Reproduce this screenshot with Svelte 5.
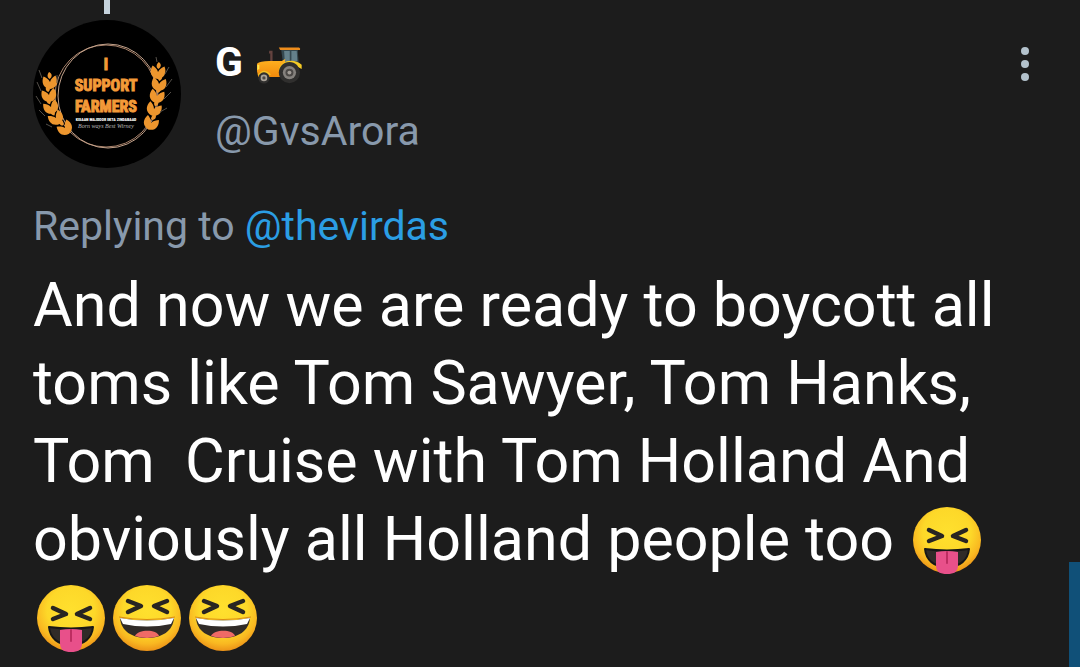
<script>
  const reactions = ['tongue', 'tongue', 'laugh', 'laugh'];
  const leftWheat = [
    { x: 17, y: 62, r: -5 },
    { x: 16, y: 75, r: -12 },
    { x: 18, y: 87, r: -22 },
    { x: 23, y: 98, r: -32 },
    { x: 32, y: 108, r: -36 }
  ];
  const rightWheat = [
    { x: 125, y: 52, r: 5 },
    { x: 126, y: 64, r: 8 },
    { x: 124, y: 76, r: 14 },
    { x: 121, y: 89, r: 20 },
    { x: 118, y: 103, r: 24 }
  ];
</script>

{#snippet wheat(grains)}
  {#each grains as g}
    <path d="M0 7C-7 6 -9 0 -6 -6C-4 -5 -1 -3 0 0C1 -3 4 -5 6 -6C9 0 7 6 0 7ZM0 -3C-3 -5 -2 -8 0 -10C3 -8 3 -5 0 -3Z" fill="#ed962e" transform="translate({g.x} {g.y}) rotate({g.r})" />
  {/each}
{/snippet}

{#snippet face(kind)}
  <svg class="emoji" viewBox="0 5 76 70" role="img" aria-label={kind === 'tongue' ? 'Squinting face with tongue' : 'Laughing face'}>
    <ellipse cx="38" cy="38" rx="34" ry="33" fill="url(#skin)" />
    <g fill="none" stroke="#282522" stroke-width="4.5" stroke-linecap="round" stroke-linejoin="round">
      {#if kind === 'tongue'}
        <path d="M20 28L33 34L20 39M57 28L44 34L57 39" />
      {:else}
        <path d="M19 21L32 26L19 32M58 21L45 26L58 32" />
      {/if}
    </g>
    {#if kind === 'tongue'}
      <path d="M16 47Q38 50 60 47C59 58 51 65 38 65S17 58 16 47Z" fill="#302b28" stroke="#171717" stroke-width="2" stroke-linejoin="round" />
      <path d="M27 50Q38 48 49 50V63C49 70 45 72 38 72S27 70 27 63Z" fill="#e8508a" />
      <path d="M38 50V61" stroke="#bd2d61" stroke-width="2" stroke-linecap="round" />
    {:else}
      <path d="M11 38Q38 43 65 38C64 51 53 58 38 58S12 51 11 38Z" fill="#302b28" />
      <path d="M11 38Q38 43 65 38L62 44Q38 49 14 44Z" fill="#fff" />
      <path d="M26 56C29 49 48 49 50 56Q38 60 26 56Z" fill="#ef6a66" />
      <path d="M10 37Q38 42 66 37" fill="none" stroke="#dc8b13" stroke-width="1" />
    {/if}
  </svg>
{/snippet}

<svg class="defs" width="0" height="0" aria-hidden="true">
  <defs>
    <radialGradient id="skin" cx="50%" cy="38%" r="64%">
      <stop offset="0" stop-color="#ffe02e" />
      <stop offset="0.55" stop-color="#fdd829" />
      <stop offset="0.8" stop-color="#f9b821" />
      <stop offset="1" stop-color="#e98b16" />
    </radialGradient>
    <linearGradient id="hood" x2="0" y2="1">
      <stop offset="0" stop-color="#ffb321" />
      <stop offset="1" stop-color="#f28a0c" />
    </linearGradient>
  </defs>
</svg>

<main>
  <article>
    <header>
      <div class="profile">
        <span class="thread"></span>
        <svg class="avatar" viewBox="0 0 148 148" role="img" aria-label="I support farmers">
          <circle cx="74" cy="74" r="74" fill="#000" />
          <ellipse cx="73" cy="76" rx="51" ry="51" fill="none" stroke="#a9826a" stroke-width="1" />
          <ellipse cx="75" cy="76" rx="50" ry="52" fill="none" stroke="#c2a18a" stroke-width="1" />
          {@render wheat(leftWheat)}
          {@render wheat(rightWheat)}
          <path d="M9 58L6 50M8 71L4 62M8 84L3 76M12 96L6 90M19 107L13 104M24 63V55M124 42L123 37M132 54L136 47M133 67L139 59M131 79L138 72M127 92L134 88" fill="none" stroke="#55504a" />
          <g class="slogan">
            <text x="73" y="50">I</text>
            <text x="73" y="71">SUPPORT</text>
            <text x="73" y="92">FARMERS</text>
          </g>
          <text class="motto" x="73" y="101">KISAAN MAJDOOR EKTA ZINDABAAD</text>
          <text class="script" x="73" y="108">Born ways Best Wirney</text>
        </svg>
      </div>
      <div class="author">
        <div class="name">G
          <svg class="tractor" viewBox="150 50 142 114" role="img" aria-label="Tractor">
            <path d="M190 64H200V97H193V72H189Z" fill="#64433f" />
            <path d="M226 60H276L279 103H232Z" fill="#354850" />
            <path d="M235 65H252V99H237ZM257 65H273L275 95H257Z" fill="#64808b" />
            <path d="M219 54H280Q285 56 283 62H223Z" fill="#ef8d1c" />
            <path d="M153 103Q162 96 190 95H228L238 89V143H157L153 126Z" fill="url(#hood)" />
            <path d="M154 107L160 106V119L154 122Z" fill="#ffe64d" />
            <path d="M219 123C222 93 265 85 288 106V119L275 112L246 107L226 127Z" fill="#f5cb25" />
            <circle cx="251" cy="130" r="32" fill="#302f2e" />
            <circle cx="251" cy="130" r="20" fill="#85817d" />
            <circle cx="251" cy="130" r="12" fill="#4b4846" />
            <circle cx="251" cy="130" r="6" fill="#a29c96" />
            <path d="M157 139Q174 116 193 137" fill="none" stroke="#f3c327" stroke-width="5" />
            <circle cx="174" cy="146" r="17" fill="#302f2e" />
            <circle cx="174" cy="146" r="10" fill="#aaa39a" />
            <circle cx="174" cy="146" r="5" fill="#4d4945" />
          </svg>
        </div>
        <div class="handle">@GvsArora</div>
      </div>
      <button aria-label="More options">
        <svg viewBox="0 0 12 36"><g fill="#b3c2cc"><circle cx="6" cy="5" r="4" /><circle cx="6" cy="18" r="4" /><circle cx="6" cy="31" r="4" /></g></svg>
      </button>
    </header>
    <p class="reply">Replying to <a href="#thevirdas">@thevirdas</a></p>
    <p class="body">And now we are ready to boycott all toms like Tom Sawyer, Tom Hanks, Tom&nbsp; Cruise with Tom Holland And obviously all Holland people too {#each reactions as kind}{@render face(kind)}{/each}</p>
  </article>
  <div class="edge"></div>
</main>

<style>
  :global(body) { margin: 0; background: #1c1c1c; }
  main { position: relative; min-height: 100vh; overflow: hidden; background: #1c1c1c; color: #fff; font-family: Roboto, sans-serif; }
  .defs { position: absolute; }
  article { padding: 0 33px; }
  header { display: flex; align-items: flex-start; }
  .profile { display: flex; flex-direction: column; align-items: center; gap: 6px; }
  .thread { width: 6px; height: 14px; background: #c5d2dc; }
  .avatar { display: block; width: 148px; height: 148px; }
  .slogan { fill: #f39a38; stroke: #f39a38; stroke-width: 1px; font: 700 16px "Roboto Condensed", Roboto, sans-serif; text-anchor: middle; }
  .motto { fill: #fff; font: 900 4px "Roboto Condensed", Roboto, sans-serif; text-anchor: middle; }
  .script { fill: #bbb; font: italic 6px "Liberation Serif", serif; text-anchor: middle; }
  .author { flex: 1; padding: 32px 0 0 34px; }
  .name { display: flex; align-items: center; gap: 13px; font-size: 41px; font-weight: 700; line-height: 60px; }
  .tractor { width: 47px; height: 38px; margin-top: 6px; }
  .handle { color: #8899ac; font-size: 41px; line-height: 48px; margin-top: 15px; }
  button { border: 0; padding: 0; margin: 46px 16px 0 0; background: none; }
  button svg { display: block; width: 12px; height: 36px; }
  p { margin: 0; }
  .reply { margin-top: 34px; color: #8899ac; font-size: 41px; line-height: 48px; }
  a { color: #2b9ee4; text-decoration: none; }
  .body { margin-top: 16px; font-size: 61px; line-height: 78px; }
  .emoji { display: inline-block; width: 76px; height: 70px; vertical-align: -17px; }
  .edge { position: absolute; right: 0; top: 562px; bottom: 0; width: 11px; background: #105078; }
</style>
